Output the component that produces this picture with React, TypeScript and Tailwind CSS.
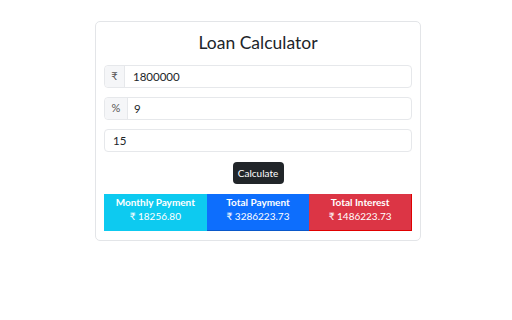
import React from "react";

export default function App() {
  const font = { fontFamily: 'Lato, "Noto Sans", sans-serif' };
  return (
    <div className="w-[512px] h-[320px] bg-white pt-[21px]" style={font}>
      <div className="ml-[95px] w-[326px] h-[220px] rounded-[5px] border border-[#e3e5e8] bg-white px-[8px] pt-[9px]">
        <h3 className="text-center text-[17.5px] leading-[24px] text-[#212529] mb-[10px]">Loan Calculator</h3>
        <div className="flex flex-col gap-[9px]">
          <div className="flex h-[23px] rounded-[4px] border border-[#e6e8eb] text-[11.5px] text-[#212529]">
            <div className="w-[20px] flex items-center justify-center bg-[#f5f6f8] border-r border-[#e6e8eb] rounded-l-[4px] text-[#555] text-[11px]">₹</div>
            <div className="flex items-center pl-[8px]">1800000</div>
          </div>
          <div className="flex h-[23px] rounded-[4px] border border-[#e6e8eb] text-[11.5px] text-[#212529]">
            <div className="w-[23px] flex items-center justify-center bg-[#f5f6f8] border-r border-[#e6e8eb] rounded-l-[4px] text-[#555] text-[11px]">%</div>
            <div className="flex items-center pl-[6px]">9</div>
          </div>
          <div className="flex h-[23px] rounded-[4px] border border-[#e6e8eb] text-[11.5px] text-[#212529]">
            <div className="flex items-center pl-[8px]">15</div>
          </div>
        </div>
        <div className="flex justify-center mt-[10px]">
          <div className="h-[22px] w-[51px] justify-center flex items-center rounded-[4px] bg-[#212529] text-white text-[10px]">Calculate</div>
        </div>
        <div className="grid grid-cols-3 mt-[10px] h-[37px] text-white text-[10px] leading-[14px] text-center">
          <div className="bg-[#0dcaf0] flex flex-col pt-[1px]">
            <div className="font-bold">Monthly Payment</div>
            <div>₹ 18256.80</div>
          </div>
          <div className="bg-[#0d6efd] border-b border-[#0a58ca] flex flex-col pt-[1px]">
            <div className="font-bold">Total Payment</div>
            <div>₹ 3286223.73</div>
          </div>
          <div className="bg-[#dc3545] border-r border-b border-[#e00000] flex flex-col pt-[1px]">
            <div className="font-bold">Total Interest</div>
            <div>₹ 1486223.73</div>
          </div>
        </div>
      </div>
    </div>
  );
}
